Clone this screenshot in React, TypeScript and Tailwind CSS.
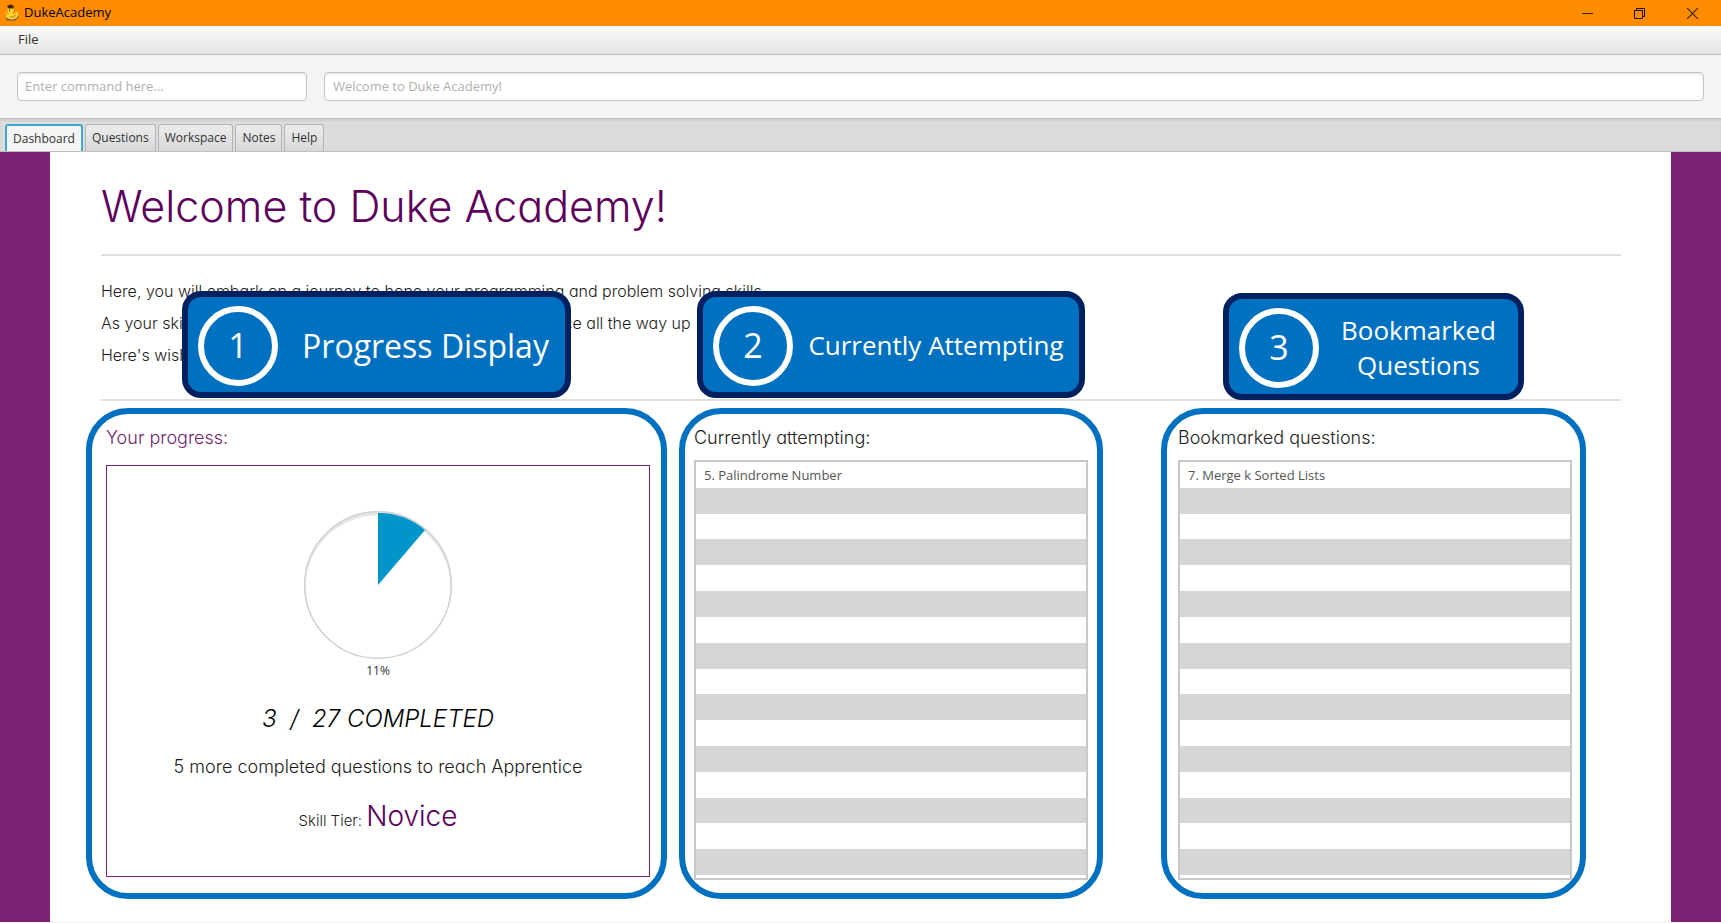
import type { ReactNode } from "react";

const tabs = ["Dashboard", "Questions", "Workspace", "Notes", "Help"];
const rows = Array.from({ length: 16 }, (_, i) => i);

function DuckIcon() {
  return (
    <svg width="16" height="18" viewBox="0 0 16 18" aria-hidden="true">
      <path d="M3 13 L4 16.500 H12 L15 14 L15.500 9.500 L13 13 Z" fill="#5d5a48" />
      <path d="M4.500 5 Q5 3.500 7.500 3.500 Q11 3.500 10.500 7 L9.500 9.500 Q12 10.500 13 8 L15.500 8.500 Q15.500 15 9.500 15.500 Q4 15.500 3 12.500 Q3 10.500 5.500 9.500 Z" fill="#fad535" />
      <path d="M0.500 9 L4.500 7 L6 9 L2.500 10.500 Z" fill="#f2b01e" />
      <path d="M7 12.500 Q10 14.500 13 11" fill="none" stroke="#c9951d" strokeWidth="1.200" />
      <path d="M4 2 L7.500 0.500 L11 2 L10 4.500 H5.500 Z" fill="#3a2510" />
      <rect x="6" y="5.500" width="1" height="1.500" fill="#3a2510" />
    </svg>
  );
}

function PieChart() {
  return (
    <svg width="150" height="150" viewBox="0 0 150 150" role="img" aria-label="11% completed">
      <circle cx="75" cy="75" r="73.500" fill="#e6e6e6" />
      <ellipse cx="75" cy="77" rx="72.500" ry="71.500" fill="#fff" />
      <circle cx="75" cy="75" r="73.300" fill="none" stroke="#d2d2d2" strokeWidth="1.500" />
      <path d="M75 75 V3 A71 71 0 0 1 122 20 Z" fill="#0096c9" />
    </svg>
  );
}

function Callout({ number, size, place, children }: { number: number; size: string; place: string; children: ReactNode }) {
  return (
    <div className={`absolute flex h-[107px] items-center rounded-[19px] border-[6px] border-[#002060] bg-[#0070c0] pl-[10px] pt-[2px] text-white ${place}`}>
      <span className="flex size-20 shrink-0 items-center justify-center rounded-full border-[6px] border-white text-[34px]">
        {number}
      </span>
      <span className={`flex-1 text-center ${size}`}>{children}</span>
    </div>
  );
}

function QuestionList({ title, item, className, callout }: { title: string; item: string; className: string; callout: ReactNode }) {
  return (
    <section className={`relative flex flex-col rounded-[42px] border-[6px] border-[#0070c0] pb-[13px] ${className}`}>
      {callout}
      <h2 className="mt-[11px] text-[18px] leading-[26px] text-[#222]">{title}</h2>
      <ul className="mt-[9px] flex flex-1 flex-col border-2 border-[#c8c8c8] bg-white pb-[3px] font-['Open_Sans',sans-serif] text-[13px] font-normal text-[#555]">
        {rows.map((i) => (
          <li key={i} className="flex flex-1 items-center px-2 leading-4 even:bg-[#d6d6d6]">
            {i === 0 ? item : null}
          </li>
        ))}
      </ul>
    </section>
  );
}

export default function App() {
  return (
    <div className="flex min-h-screen flex-col bg-[#f4f4f4] font-['Open_Sans',sans-serif] text-[13px] text-[#333]">
      <header className="flex h-[26px] items-center bg-[#ff8c00] pl-[3px] text-black">
        <DuckIcon />
        <h1 className="flex-1 pl-[5px] text-[13px]">DukeAcademy</h1>
        <div className="flex">
          <button aria-label="Minimize" className="flex h-[26px] w-[52px] items-center justify-center">
            <svg width="11" height="11" viewBox="0 0 11 11"><path d="M0 5.500H11" stroke="#3d2200" /></svg>
          </button>
          <button aria-label="Restore" className="flex h-[26px] w-[52px] items-center justify-center">
            <svg width="11" height="11" viewBox="0 0 11 11" fill="none" stroke="#1a0e00"><path d="M0.500 2.500h8v8h-8zM2.500 2.500v-2h8v8h-2" /></svg>
          </button>
          <button aria-label="Close" className="mr-[2px] flex h-[26px] w-[54px] items-center justify-center">
            <svg width="11" height="11" viewBox="0 0 11 11"><path d="M0 0L11 11M11 0L0 11" stroke="#3d2200" strokeWidth="1.200" /></svg>
          </button>
        </div>
      </header>

      <nav className="flex h-[29px] items-center border-b border-[#bdbdbd] bg-linear-to-b from-[#fdfdfd] to-[#e3e3e3] pl-[18px]">
        <button>File</button>
      </nav>

      <div className="flex h-[63px] items-center gap-[17px] px-[17px] pb-[3px] pt-[2px]">
        <input
          aria-label="Command"
          placeholder="Enter command here..."
          className="h-[29px] w-[290px] rounded-[4px] border border-[#c4c4c4] bg-white px-[7px] shadow-[inset_0_2px_2px_#efefef] placeholder:text-[#b0b0b0]"
        />
        <input
          aria-label="Result"
          placeholder="Welcome to Duke Academy!"
          className="h-[29px] flex-1 rounded-[4px] border border-[#c4c4c4] bg-white px-2 shadow-[inset_0_2px_2px_#efefef] placeholder:text-[#b0b0b0]"
        />
      </div>

      <div role="tablist" className="flex h-[34px] items-end gap-[2px] border-b border-t border-[#c0c0c0] bg-[#dcdcdc] pl-[5px] text-[12px] shadow-[inset_0_2px_2px_#cfcfcf]">
        {tabs.map((tab, i) => (
          <button
            key={tab}
            role="tab"
            aria-selected={i === 0}
            className={
              i === 0
                ? "h-[27px] rounded-t-[3px] border-2 border-b-0 border-[#3fa9cf] bg-[#f4f4f4] px-[6px]"
                : "h-[27px] rounded-t-[3px] border border-b-0 border-[#b5b5b5] bg-linear-to-b from-[#ececec] to-[#d8d8d8] px-[6px]"
            }
          >
            {tab}
          </button>
        ))}
      </div>

      <main className="mb-px flex-1 border-x-[50px] border-[#7c2176] bg-white font-['Inter',sans-serif] font-light [font-feature-settings:'cv11']">
        <div className="ml-[51px] mr-[50px]">
          <h2 className="pb-[22px] pt-[28px] text-[43px] leading-[52px] text-[#5c005c]">Welcome to Duke Academy!</h2>
          <div className="h-[147px] border-y-2 border-[#dfdfdf] pt-[19px] text-[16px] leading-8 text-[#1c1c1c]">
            <p>Here, you will embark on a journey to hone your programming and problem solving skills.</p>
            <p>As your skills improve, you will rise through the tiers from Novice all the way up</p>
            <p>Here's wishing you all the best in your journey!</p>
          </div>
        </div>

        <div className="mb-[22px] ml-[36px] mr-[85px] mt-[7px] grid h-[491px] grid-cols-[581fr_12fr_424fr_58fr_425fr]">
          <section className="relative col-start-1 flex flex-col rounded-[42px] border-[6px] border-[#0070c0] pb-[16px] pl-[14px] pr-[11px]">
            <Callout number={1} size="pl-2 text-[32px]" place="bottom-full mb-4 left-[90px] w-[389px] font-['Open_Sans',sans-serif] font-normal">
              Progress Display
            </Callout>
            <h2 className="mt-[11px] text-[18px] leading-[26px] text-[#6e1f6e]">Your progress:</h2>
            <div className="mt-[14px] flex flex-1 flex-col items-center border border-[#7c2176] pt-[44px]">
              <PieChart />
              <p className="mt-[3px] font-['Open_Sans',sans-serif] text-[12px] font-normal leading-4">11%</p>
              <p className="mt-[24px] whitespace-pre text-[24px] italic leading-8 text-black">3  /  27 COMPLETED</p>
              <p className="mt-[20px] text-[18px] leading-6 text-[#1c1c1c]">5 more completed questions to reach Apprentice</p>
              <p className="mt-[19px] text-[15px] leading-9 text-[#1c1c1c]">
                Skill Tier: <span className="text-[28px] text-[#5c005c]">Novice</span>
              </p>
            </div>
          </section>
          <QuestionList
            title="Currently attempting:"
            item="5. Palindrome Number"
            className="col-start-3 pl-[9px] pr-[9px]"
            callout={
              <Callout number={2} size="text-[26px]" place="bottom-full mb-4 left-3 w-[388px] font-['Open_Sans',sans-serif] font-normal">
                Currently Attempting
              </Callout>
            }
          />
          <QuestionList
            title="Bookmarked questions:"
            item="7. Merge k Sorted Lists"
            className="col-start-5 pl-[11px] pr-[8px]"
            callout={
              <Callout number={3} size="text-[26px] leading-[35px]" place="bottom-full mb-[14px] left-14 w-[301px] font-['Open_Sans',sans-serif] font-normal">
                Bookmarked
                <br />
                Questions
              </Callout>
            }
          />
        </div>
      </main>
    </div>
  );
}
